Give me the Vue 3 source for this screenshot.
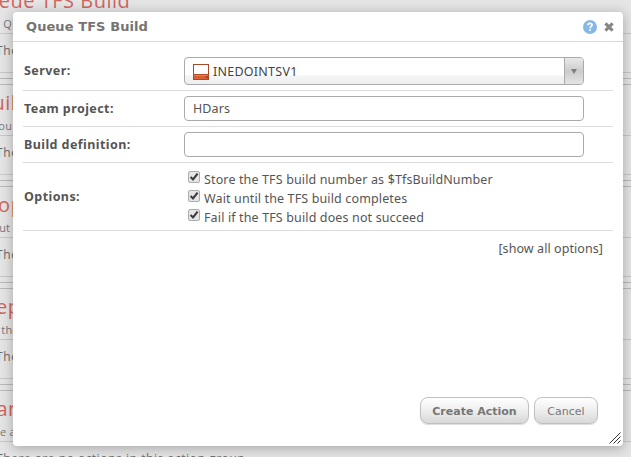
<script setup>
const groups = [
  { title: 'Queue TFS Build', note: 'TFS-All Q', shift: -30, noteShift: -35 },
  { title: 'Build', note: 'You', shift: -21, noteShift: -8 },
  { title: 'Copy', note: 'Aut', shift: -15, noteShift: -8 },
  { title: 'Deploy', note: 'In the', shift: -19, noteShift: -12 },
  { title: 'Manual', note: 'Le a', shift: -22, noteShift: -6 },
]
const options = [
  'Store the TFS build number as $TfsBuildNumber',
  'Wait until the TFS build completes',
  'Fail if the TFS build does not succeed',
]
</script>

<template>
  <div class="page">
    <div class="backdrop">
      <section v-for="g in groups" :key="g.title" class="group">
        <div class="group-head">
          <h2 :style="{ marginLeft: g.shift + 'px' }">{{ g.title }}</h2>
          <p :style="{ marginLeft: g.noteShift + 'px' }">{{ g.note }}</p>
        </div>
        <div class="empty">There are no actions in this action group.</div>
        <div class="foot"></div>
      </section>
    </div>

    <div class="dialog">
      <header>
        <h1>Queue TFS Build</h1>
        <svg class="help" width="14" height="14" viewBox="0 0 14 14">
          <circle cx="7" cy="7" r="7" fill="#86b8e6" />
          <path d="M4.9 5.2C5 3.9 5.9 3.4 7 3.4s2.1.7 2.1 1.7c0 1.4-2 1.4-2 3.1" fill="none" stroke="#fff" stroke-width="1.7" />
          <rect x="6.2" y="9.2" width="1.7" height="1.7" fill="#fff" />
        </svg>
        <svg class="close" width="10" height="10" viewBox="0 0 10 10">
          <path d="M1.4 1.4L8.6 8.6M8.6 1.4L1.4 8.6" stroke="#868686" stroke-width="3.1" />
        </svg>
      </header>

      <div class="form">
        <div class="row server">
          <label class="name">Server:</label>
          <div class="select">
            <svg width="16" height="16" viewBox="0 0 16 16">
              <rect x=".5" y=".5" width="15" height="15" fill="#fff" stroke="#a94b29" />
              <rect x="1" y="10" width="14" height="5" fill="#d95f34" />
              <path d="M0 10.5h16" stroke="#b34b25" />
              <path d="M1 11.5h14" stroke="#ec7d50" />
              <rect x="13" y="12" width="1.5" height="2" fill="#91381a" />
            </svg>
            <span class="value">INEDOINTSV1</span>
            <span class="arrow"><svg width="6" height="5" viewBox="0 0 6 5"><path d="M0 0h6L3 5z" fill="#808080" /></svg></span>
          </div>
        </div>
        <div class="row">
          <label class="name">Team project:</label>
          <div class="input">HDars</div>
        </div>
        <div class="row">
          <label class="name">Build definition:</label>
          <div class="input"></div>
        </div>
        <div class="row opts">
          <label class="name">Options:</label>
          <div class="checks">
            <div v-for="o in options" :key="o" class="check">
              <svg width="12" height="12" viewBox="0 0 12 12">
                <rect x=".5" y=".5" width="11" height="11" rx="1.5" fill="#e5e5e5" stroke="#acacac" />
                <path d="M2.6 6.1L5 8.4L9.6 2.6" fill="none" stroke="#3c3c3c" stroke-width="2.1" />
              </svg>
              <span>{{ o }}</span>
            </div>
          </div>
        </div>
        <div class="more">[show all options]</div>
      </div>

      <footer>
        <button class="primary">Create Action</button>
        <button>Cancel</button>
      </footer>
      <svg class="grip" width="12" height="12" viewBox="0 0 12 12">
        <path d="M.5 11.5l11-11M4.5 11.5l7-7M8.5 11.5l3-3" stroke="#333" stroke-width="1" />
      </svg>
    </div>
  </div>
</template>

<style>
body { margin: 0; overflow: hidden; }
</style>

<style scoped>
* { box-sizing: border-box; }
.page {
  position: relative;
  width: 631px;
  height: 457px;
  overflow: hidden;
  background: #e5e5e5;
  color: #555;
  font: 12px "Noto Sans", sans-serif;
}
.backdrop { position: absolute; top: -18px; left: 0; width: 631px; }
.group { height: 102px; border-top: 1px solid #bababa; white-space: nowrap; }
.group-head { height: 51px; border-bottom: 1px solid #c8c8c8; padding-top: 4px; }
h2 {
  margin: 0;
  height: 28px;
  font: 400 20px/28px "Open Sans", sans-serif;
  letter-spacing: .5px;
  color: #d06560;
}
.group-head p { margin: 0; font: 11px/18px "Open Sans", sans-serif; letter-spacing: .2px; color: #777; }
.empty {
  height: 39px;
  padding-top: 8px;
  border-bottom: 1px solid #c8c8c8;
  font: 12px/17px "Open Sans", sans-serif;
  letter-spacing: .58px;
  text-indent: -4px;
  color: #6a6a6a;
}
.foot { height: 6px; border-bottom: 1px solid #bababa; }

.dialog {
  position: absolute;
  left: 13px;
  top: 12px;
  width: 610px;
  height: 434px;
  border-radius: 4px;
  background: #fff;
  box-shadow: 0 2px 12px 1px rgba(0, 0, 0, .25);
  display: flex;
  flex-direction: column;
}
header {
  height: 30px;
  flex: none;
  border-bottom: 1px solid #d9d9d9;
  display: flex;
  align-items: center;
  padding: 0 9px 0 13px;
}
h1 { margin: 0; font: bold 13px/16px "DejaVu Sans", sans-serif; color: #747474; letter-spacing: .08px; }
.help { margin-left: auto; margin-right: 7px; }
.form { margin: 0 10px; flex: 1; }
.row { height: 36px; border-bottom: 1px solid #dcdcdc; display: flex; align-items: center; }
.row.server { height: 49px; padding-top: 9px; }
.row.opts { height: 68px; }
.name {
  width: 161px;
  padding-left: 1px;
  flex: none;
  font-weight: bold;
  font-size: 12.5px;
  letter-spacing: .42px;
}
.select, .input {
  width: 400px;
  border: 1px solid #aaa;
  border-radius: 4px;
  background: #fff;
  display: flex;
  align-items: center;
}
.select {
  height: 28px;
  padding-left: 8px;
  background: linear-gradient(#fff 0 65%, #f4f5f6 69%, #eceef0);
  overflow: hidden;
}
.select svg { flex: none; }
.select > svg { margin-top: 2px; }
.value { margin-left: 4px; padding-top: 1px; font-size: 12.5px; letter-spacing: .25px; color: #444; }
.arrow {
  margin-left: auto;
  width: 19px;
  height: 100%;
  border-left: 1px solid #aaa;
  background: linear-gradient(#e9e9e9, #ccc 50%, #e4e4e4);
  display: flex;
  align-items: center;
  justify-content: center;
  padding-top: 2px;
  padding-right: 1px;
}
.input { height: 25px; padding-left: 8px; font-size: 12.5px; letter-spacing: .1px; }
.checks { padding: 3px 0 0 4px; }
.check { height: 19px; display: flex; align-items: center; font-size: 12.5px; letter-spacing: .135px; white-space: nowrap; }
.check svg { margin-right: 4px; margin-top: -5px; }
.more { text-align: right; padding: 9px 10px 0 0; font-size: 12.5px; line-height: 18px; letter-spacing: .07px; }
footer { display: flex; justify-content: flex-end; gap: 5px; padding: 0 25px 22px 0; }
button {
  height: 27px;
  width: 64px;
  padding: 2px 0 0;
  border: 1px solid #c0c0c0;
  border-radius: 8px;
  background: linear-gradient(#fff, #f0f0f0 45%, #d8d8d8);
  box-shadow: 0 1px 1px rgba(0, 0, 0, .14);
  font: 11px "DejaVu Sans", sans-serif;
  color: #777;
}
button.primary { width: 109px; font-weight: bold; }
.grip { position: absolute; right: 2px; bottom: 2px; }
</style>
